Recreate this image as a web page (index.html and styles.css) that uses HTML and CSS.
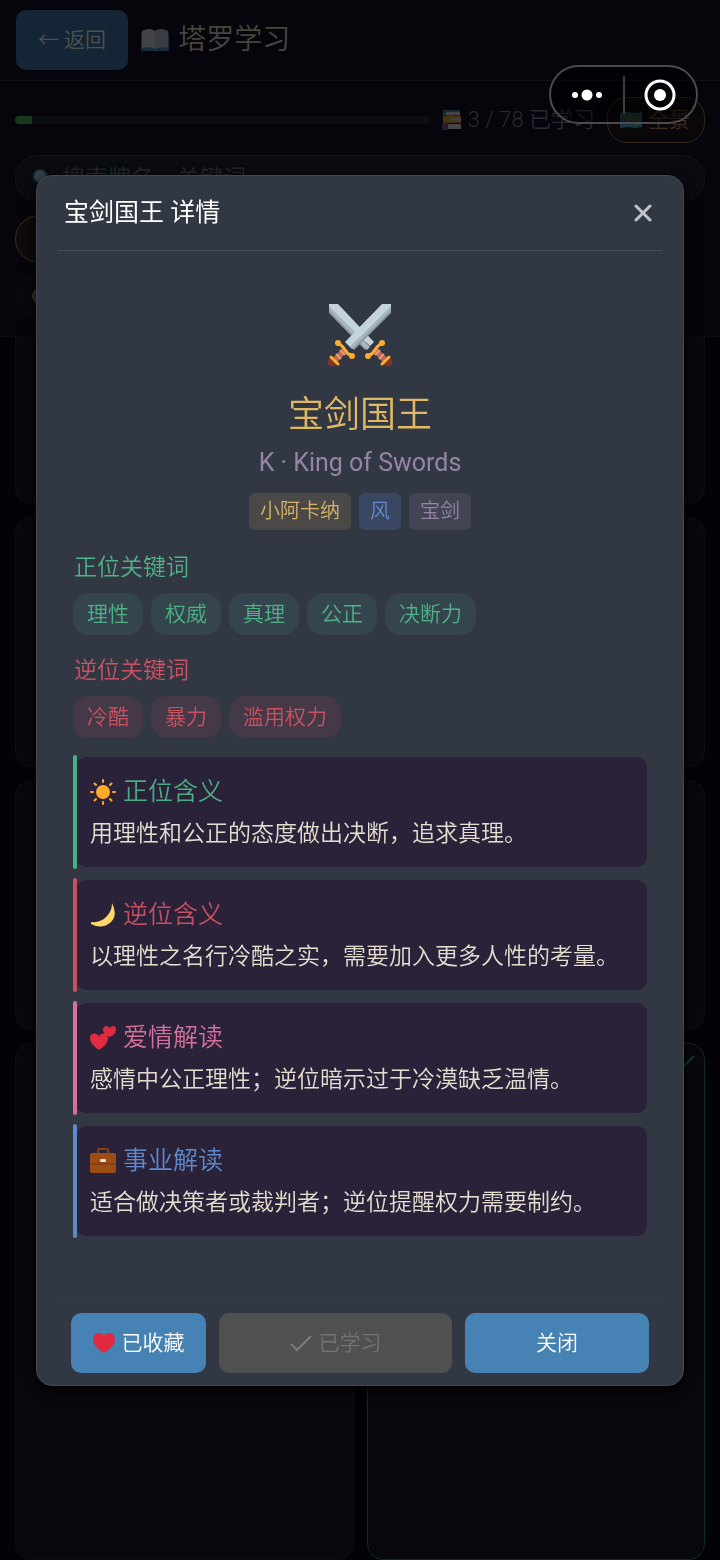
FILE: index.html
```html
<!DOCTYPE html>
<html lang="zh-CN">
<head>
<meta charset="utf-8">
<meta name="viewport" content="width=device-width, initial-scale=1">
<title>塔罗学习</title>
<link rel="stylesheet" href="styles.css">
</head>
<body>
<div class="app">
  <header class="topbar">
    <button class="back" type="button">← 返回</button>
    <svg class="icon-book dim" viewBox="0 0 30 24" aria-hidden="true"><path fill="#3b88a8" d="M1 5h28v18H1z"/><path fill="#d3d7da" d="M2 3q8-4 13 0v18q-5-3-13-1z"/><path fill="#b4babe" d="M28 3q-8-4-13 0v18q5-3 13-1z"/></svg>
    <h1 class="topbar-title">塔罗学习</h1>
  </header>
  <section class="tools">
    <div class="progress-row">
      <div class="progress"><div class="progress-fill"></div></div>
      <span class="progress-text"><svg class="icon-stack dim" viewBox="0 0 20 20" aria-hidden="true"><path fill="#3d8595" d="M1 0h17v6H1z"/><path fill="#d9d9d9" d="M4 2h14v3H4zM5 14h14v5H5z"/><path fill="#e59a1c" d="M1 6h18v7H1z"/><path fill="#d8c79c" d="M8 8h11v3H8z"/><path fill="#7d4a92" d="M0 13h6v7H0z"/></svg>3 / 78 已学习</span>
      <button class="panorama" type="button"><svg class="icon-map dim" viewBox="0 0 22 18" aria-hidden="true"><path fill="#3f9fc0" d="M0 2l7-1 8 1 7-1v15l-7 1-8-1-7 1z"/><path fill="#72a552" d="M3 4l7-1 3 4-3 5-4-3zM14 5l6-1v7l-4 3z"/></svg>全景</button>
    </div>
    <label class="search">
      <svg class="icon-search dim" viewBox="0 0 24 24" aria-hidden="true"><circle cx="9" cy="9" r="7" fill="#8fc0d0" stroke="#5d7480" stroke-width="2"/><path stroke="#5d7480" stroke-width="3" d="M14 14l8 8"/></svg>
      <input class="search-input" type="text" placeholder="搜索牌名、关键词" aria-label="搜索">
    </label>
    <div class="filters"><button class="filter active" type="button">全部</button></div>
    <div class="filters"><button class="filter" type="button"><svg class="icon-dot dim" viewBox="0 0 20 20" aria-hidden="true"><circle cx="10" cy="10" r="9" fill="#c29a3c"/></svg></button></div>
  </section>
  <main class="grid">
    <article class="tile"></article><article class="tile"></article>
    <article class="tile"></article><article class="tile"></article>
    <article class="tile"></article><article class="tile"></article>
    <article class="tile tall"></article>
    <article class="tile tall learned"><svg class="icon-tick" viewBox="0 0 14 20" aria-hidden="true"><path d="M1 14L13 2" fill="none" stroke="#17352f" stroke-width="2"/></svg></article>
  </main>
</div>

<div class="overlay">
  <section class="modal" role="dialog" aria-modal="true" aria-labelledby="dlg-title">
    <header class="modal-head">
      <h2 class="modal-title" id="dlg-title">宝剑国王 详情</h2>
      <button class="close" type="button" aria-label="关闭详情"><svg class="icon-close" viewBox="0 0 18 18" aria-hidden="true"><path d="M2 2l14 14M16 2L2 16" stroke="#c4c4c8" stroke-width="3" stroke-linecap="round"/></svg></button>
    </header>
    <div class="modal-body">
      <div class="hero">
        <svg class="icon-swords" viewBox="0 0 66 64" aria-hidden="true">
          <defs>
            <g id="hilt">
              <path stroke="#bf6952" stroke-width="6" d="M47 45l12 12"/>
              <path stroke="#e59a83" stroke-width="2" d="M48 51l5-5M52 55l5-5"/>
              <circle cx="61" cy="58" r="4.500" fill="#7d3529"/>
              <path stroke="#ffad2f" stroke-width="3" stroke-linecap="round" d="M41 52q5-2 7-6t7-7M55 60l7-7"/>
              <circle cx="41" cy="52" r="3" fill="#ffad2f"/><circle cx="55" cy="39" r="3" fill="#ffad2f"/>
            </g>
          </defs>
          <path fill="#8b9aa3" d="M2 0v9l36 37 4-4z"/>
          <path fill="#c5d3dc" d="M2 0h9l36 38-4 4L2 4z"/>
          <path fill="#a7b6bf" d="M2 2l41 41-3 3L2 6z"/>
          <use href="#hilt"/>
          <path fill="#8b9aa3" d="M64 0v9L27 46l-5-4z"/>
          <path fill="#c5d3dc" d="M64 0h-9L18 38l5 5L64 4z"/>
          <path fill="#a7b6bf" d="M64 2L23 43l2 2L64 6z"/>
          <use href="#hilt" transform="matrix(-1 0 0 1 66 0)"/>
        </svg>
        <h3 class="card-name">宝剑国王</h3>
        <p class="card-sub">K · King of Swords</p>
        <div class="tags"><span class="tag gold">小阿卡纳</span><span class="tag blue">风</span><span class="tag gray">宝剑</span></div>
      </div>
      <section class="keywords up">
        <h4 class="kw-title">正位关键词</h4>
        <ul class="chips"><li class="chip">理性</li><li class="chip">权威</li><li class="chip">真理</li><li class="chip">公正</li><li class="chip">决断力</li></ul>
      </section>
      <section class="keywords down">
        <h4 class="kw-title">逆位关键词</h4>
        <ul class="chips"><li class="chip">冷酷</li><li class="chip">暴力</li><li class="chip">滥用权力</li></ul>
      </section>
      <div class="meanings">
        <section class="meaning green">
          <h4 class="meaning-title"><svg class="icon-m" viewBox="0 0 26 26" aria-hidden="true"><circle cx="13" cy="13" r="7" fill="#ffa92b"/><path stroke="#ffa92b" stroke-width="2" stroke-linecap="round" d="M13 1v2M13 23v2M1 13h2M23 13h2M4.500 4.500l1.500 1.500M20 20l1.500 1.500M4.500 21.500l1.500-1.500M20 6l1.500-1.500"/></svg>正位含义</h4>
          <p class="meaning-text">用理性和公正的态度做出决断，追求真理。</p>
        </section>
        <section class="meaning red">
          <h4 class="meaning-title"><svg class="icon-m" viewBox="0 0 26 26" aria-hidden="true"><path fill="#ffd767" d="M22 1q6 12-1 19-9 8-20 2v-2q10 1 16-6 5-5 5-13z"/></svg>逆位含义</h4>
          <p class="meaning-text">以理性之名行冷酷之实，需要加入更多人性的考量。</p>
        </section>
        <section class="meaning pink">
          <h4 class="meaning-title"><svg class="icon-m" viewBox="0 0 26 26" aria-hidden="true"><path fill="#e32b40" d="M9 25C3 21 0 17 0 13.500 0 10 2 8.500 4.500 8.500 7 8.500 8.500 10 9 11.500 9.500 10 11 8.500 13.500 8.500 16 8.500 18 10 18 13.500 18 17 15 21 9 25zM20 12c-4-2-7-4-7-7.500C13 2.500 14.500 1 16.500 1 18 1 19.500 2 20 3.500 20.500 2 21.500 1 23 1c2 0 3 1.500 3 3.500C26 8 23.500 10 20 12z"/></svg>爱情解读</h4>
          <p class="meaning-text">感情中公正理性；逆位暗示过于冷漠缺乏温情。</p>
        </section>
        <section class="meaning azure">
          <h4 class="meaning-title"><svg class="icon-m" viewBox="0 0 26 26" aria-hidden="true"><path fill="none" stroke="#874016" stroke-width="2" d="M8 5V2q0-1 1-1h8q1 0 1 1v3"/><rect y="5" width="26" height="20" rx="2" fill="#9c4d16"/><path stroke="#6c3312" d="M0 16h26"/><rect x="10" y="11" width="6" height="3" rx="1" fill="#e6e0dc"/></svg>事业解读</h4>
          <p class="meaning-text">适合做决策者或裁判者；逆位提醒权力需要制约。</p>
        </section>
      </div>
    </div>
    <footer class="modal-foot">
      <button class="btn" type="button"><svg class="icon-heart" viewBox="0 0 22 20" aria-hidden="true"><path fill="#e0293e" d="M11 20Q0 13 0 6q1-6 6-6 4 0 5 3 1-3 5-3 5 0 6 6 0 7-11 14z"/></svg>已收藏</button>
      <button class="btn" type="button" disabled><svg class="icon-check" viewBox="0 0 22 18" aria-hidden="true"><path d="M1 10l6 6L21 2" fill="none" stroke="#7c7c7c" stroke-width="2"/></svg>已学习</button>
      <button class="btn" type="button">关闭</button>
    </footer>
  </section>
</div>

<nav class="capsule" aria-label="小程序菜单">
  <button class="capsule-btn" type="button" aria-label="更多"><svg class="icon-more" viewBox="0 0 32 12" aria-hidden="true"><circle cx="4" cy="6" r="3" fill="#fff"/><circle cx="16" cy="6" r="5.500" fill="#fff"/><circle cx="28" cy="6" r="3" fill="#fff"/></svg></button>
  <button class="capsule-btn" type="button" aria-label="退出"><svg class="icon-exit" viewBox="0 0 32 32" aria-hidden="true"><circle cx="16" cy="16" r="14" fill="none" stroke="#fff" stroke-width="3"/><circle cx="16" cy="16" r="6" fill="#fff"/></svg></button>
</nav>
</body>
</html>
```
FILE: styles.css
```css
* { box-sizing: border-box; }
body {
  margin: 0;
  background: #020207;
  color: #fff;
  font-family: Roboto, "Noto Sans CJK SC", sans-serif;
  font-size: 21px;
  font-weight: 350;
  line-height: 30px;
}
h1, h2, h3, h4, p, ul { margin: 0; padding: 0; font-weight: inherit; }
ul { list-style: none; }
button, input { font: inherit; color: inherit; border: 0; background: none; }
svg { display: block; flex: none; }
.dim { opacity: .3; }

.app { height: 100vh; overflow: hidden; }
.topbar {
  display: flex;
  align-items: center;
  height: 81px;
  padding: 0 16px;
  background: #05050b;
  border-bottom: 1px solid #0f0f17;
}
.back {
  height: 60px;
  padding: 0 22px;
  border-radius: 10px;
  background: #142635;
  color: #505050;
}
.icon-book { width: 30px; height: 24px; margin: 0 8px 0 12px; }
.topbar-title { font-size: 28px; line-height: 40px; color: #48453f; }
.tools {
  display: flex;
  flex-direction: column;
  height: 256px;
  padding: 15px 15px 0;
  background: #05050b;
  border-bottom: 1px solid #0c0c14;
}
.progress-row { display: flex; align-items: center; gap: 12px; height: 48px; margin-bottom: 11px; }
.progress { flex: 1; height: 8px; border-radius: 4px; background: #0c0e13; overflow: hidden; }
.progress-fill { width: 4%; height: 100%; background: #15391b; }
.progress-text { display: flex; align-items: center; gap: 6px; font-size: 22px; color: #2c2a30; }
.icon-stack { width: 20px; height: 20px; }
.panorama {
  display: flex;
  align-items: center;
  gap: 6px;
  height: 46px;
  padding: 0 14px 0 12px;
  border: 1px solid #352717;
  border-radius: 20px;
  background: #0a070b;
  color: #3b2f1c;
}
.icon-map { width: 22px; height: 18px; }
.search {
  display: flex;
  align-items: center;
  gap: 8px;
  height: 47px;
  padding: 0 16px;
  border: 1px solid #14151b;
  border-radius: 23px;
  background: #0a0b11;
}
.icon-search { width: 22px; height: 22px; }
.search-input { flex: 1; min-width: 0; font-size: 23px; padding: 0; }
.search-input::placeholder { color: #25252a; }
.filters { display: flex; height: 48px; margin-top: 13px; }
.filters + .filters { margin-top: 9px; }
.filter { width: 100px; border-radius: 24px; background: #08080f; color: #2b2414; }
.filter.active { border: 1px solid #38301f; background: #0f0a0c; }
.icon-dot { width: 20px; height: 20px; margin-left: 10px; }
.grid {
  display: grid;
  grid-template-columns: 1fr 1fr;
  gap: 13px;
  padding: 0 15px;
}
.tile { height: 250px; border: 1px solid #0e0f16; border-radius: 16px; background: #07070d; }
.tile:nth-child(-n+2) { height: 167px; border-top: 0; border-radius: 0 0 16px 16px; }
.tile.tall { height: 517px; }
.tile.learned { display: flex; justify-content: flex-end; padding: 10px 9px; border-color: #0f2a27; }
.icon-tick { width: 14px; height: 20px; }

.overlay {
  position: fixed;
  inset: 0;
  display: flex;
  align-items: center;
  justify-content: center;
  padding: 0 5%;
}
.modal {
  width: 100%;
  padding: 0 21px;
  border: 1px solid #424653;
  border-radius: 16px;
  background: #323744;
  box-shadow: 0 4px 12px #000;
}
.modal-head {
  display: flex;
  align-items: center;
  justify-content: space-between;
  height: 75px;
  padding: 0 6px;
  border-bottom: 1px solid #4a4c59;
}
.modal-title { font-size: 25px; line-height: 36px; font-weight: 400; }
.close { display: flex; padding: 4px; }
.icon-close { width: 18px; height: 18px; }
.modal-body { padding: 53px 15px 63px; }
.hero { display: flex; flex-direction: column; align-items: center; }
.icon-swords { width: 66px; height: 64px; }
.card-name { margin-top: 21px; font-size: 36px; line-height: 52px; color: #dfb963; }
.card-sub { margin-top: 4px; font-size: 25px; line-height: 36px; font-weight: 400; color: #9585a5; }
.tags { display: flex; gap: 8px; margin-top: 12px; }
.tag { padding: 3px 11px 4px; border-radius: 6px; font-size: 20px; }
.gold { background: #4a4948; color: #d5b468; }
.blue { background: #394761; color: #638ccc; }
.gray { background: #424454; color: #9585a5; }
.keywords { margin-top: 20px; }
.down { margin-top: 18px; }
.kw-title { padding-left: 1px; font-size: 23px; line-height: 36px; }
.chips { display: flex; flex-wrap: wrap; gap: 8px; margin-top: 7px; }
.chip { padding: 6px 14px; border-radius: 16px; }
.up { color: #4eb286; }
.up .chip { background: #35454e; }
.down { color: #cb5263; }
.down .chip { background: #453947; }
.meanings { display: flex; flex-direction: column; gap: 9px; margin-top: 17px; }
.meaning {
  position: relative;
  height: 114px;
  padding: 19px 0 0 17px;
  color: var(--accent);
}
.meaning::before {
  content: "";
  position: absolute;
  inset: 2px 0 2px 3px;
  border-radius: 10px;
  background: #292239;
}
.meaning::after {
  content: "";
  position: absolute;
  inset: 0 auto 0 0;
  width: 4px;
  border-radius: 2px;
  background: var(--accent);
}
.meaning-title, .meaning-text { position: relative; z-index: 1; }
.green { --accent: #4aad85; }
.red { --accent: #c75064; }
.pink { --accent: #d6719e; }
.azure { --accent: #6189c8; }
.meaning-title { display: flex; align-items: center; gap: 7px; font-size: 25px; line-height: 36px; }
.icon-m { width: 26px; height: 26px; }
.meaning-text { margin-top: 6px; font-size: 23px; line-height: 36px; color: #e5ddd0; }
.modal-foot {
  display: grid;
  grid-template-columns: 135fr 233fr 184fr;
  gap: 13px;
  padding: 11px 13px 12px;
  border-top: 1px solid #39394a;
}
.btn {
  display: flex;
  align-items: center;
  justify-content: center;
  gap: 7px;
  height: 60px;
  padding: 0;
  border-radius: 10px;
  background: #4682b4;
}
.btn:disabled { background: #505050; color: #737373; }
.icon-heart { width: 22px; height: 20px; }
.icon-check { width: 22px; height: 18px; }

.capsule {
  position: fixed;
  top: 65px;
  right: 22px;
  display: flex;
  align-items: center;
  width: 149px;
  height: 59px;
  border: 2px solid #4b4b4e;
  border-radius: 30px;
  background: rgba(0, 0, 0, .45);
}
.capsule-btn { flex: 1; display: flex; justify-content: center; align-items: center; height: 38px; padding: 0; }
.capsule-btn + .capsule-btn { border-left: 2px solid #3c3c40; }
.icon-more { width: 32px; height: 12px; }
.icon-exit { width: 32px; height: 32px; }
```
